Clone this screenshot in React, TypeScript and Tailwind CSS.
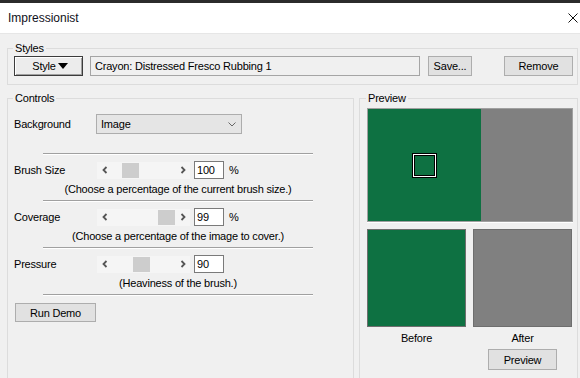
const sliders = [
  {
    label: 'Brush Size',
    value: '100',
    pct: true,
    thumb: 'ml-[10px]',
    hint: '(Choose a percentage of the current brush size.)',
  },
  {
    label: 'Coverage',
    value: '99',
    pct: true,
    thumb: 'ml-[46px]',
    hint: '(Choose a percentage of the image to cover.)',
  },
  {
    label: 'Pressure',
    value: '90',
    pct: false,
    thumb: 'ml-[21px]',
    hint: '(Heaviness of the brush.)',
  },
];

function Separator() {
  return <div className="ml-[35px] h-[2px] w-[270px] border-t border-[#a0a0a0] bg-white" />;
}

function Arrow({ dir }: { dir: 'left' | 'right' }) {
  return (
    <svg width="6" height="8" viewBox="0 0 6 8">
      <polyline
        points={dir === 'left' ? '4.5,1 1.5,4 4.5,7' : '1.5,1 4.5,4 1.5,7'}
        fill="none"
        stroke="#555"
        strokeWidth={1.8}
      />
    </svg>
  );
}

function SliderRow({
  label,
  value,
  pct,
  thumb,
  hint,
}: {
  label: string;
  value: string;
  pct: boolean;
  thumb: string;
  hint: string;
}) {
  return (
    <div className="h-[45px] pt-[6px]">
      <div className="flex h-[18px] items-center">
        <span className="w-[89px] pl-[6px]">{label}</span>
        <div className="flex h-[17px] w-[93px] bg-[#f5f5f5]">
          <div className="flex w-[15px] items-center justify-center">
            <Arrow dir="left" />
          </div>
          <div className="flex flex-1 items-center">
            <div className={`h-[15px] w-[17px] bg-[#cdcdcd] ${thumb}`} />
          </div>
          <div className="flex w-[15px] items-center justify-center">
            <Arrow dir="right" />
          </div>
        </div>
        <div className="ml-[4px] h-[18px] w-[30px] border border-[#7a7a7a] bg-white pl-[2px] leading-[16px]">
          {value}
        </div>
        {pct && <span className="ml-[5px]">%</span>}
      </div>
      <div className="ml-[35px] mt-[3px] w-[270px] text-center leading-[14px]">{hint}</div>
    </div>
  );
}

export default function App() {
  return (
    <div className="h-[378px] w-[580px] overflow-hidden bg-[#f0f0f0] font-['Liberation_Sans',Arial,sans-serif] text-[11px] leading-[12px] tracking-[-0.2px] text-black">
      <div className="h-[3px] bg-[#2b2b2b]" />

      {/* Title bar */}
      <div className="flex h-[31px] items-center justify-between border-b border-[#e6e6e6] bg-white pl-[8px] pr-[2px]">
        <span className="text-[12px] tracking-normal text-[#101020]">Impressionist</span>
        <svg width="10" height="10" viewBox="0 0 10 10">
          <path d="M0.5 0.5L9.5 9.5M9.5 0.5L0.5 9.5" stroke="#111" strokeWidth={1} />
        </svg>
      </div>

      <div className="pl-[7px]">
        {/* Styles */}
        <fieldset className="mt-[8px] w-[571px] border border-[#dcdcdc] px-0 pb-[8px] pt-[2px]">
          <legend className="ml-[5px] px-[2px] leading-[12px]">Styles</legend>
          <div className="flex items-center">
            <button className="ml-[6px] flex h-[20px] w-[69px] items-center justify-center border border-[#3c3c3c] bg-[#ececec] pl-[3px] shadow-[inset_1px_1px_0_#fff,inset_-1px_-1px_0_#a0a0a0]">
              <span>Style</span>
              <svg width="10" height="6" viewBox="0 0 10 6" className="ml-[2px]">
                <polygon points="0,0 10,0 5,6" fill="#000" />
              </svg>
            </button>
            <div className="ml-[7px] flex h-[20px] w-[330px] items-center border border-[#a5a5a5] pl-[4px]">
              Crayon: Distressed Fresco Rubbing 1
            </div>
            <button className="ml-[8px] h-[20px] w-[44px] border border-[#adadad] bg-[#e1e1e1]">
              Save...
            </button>
            <button className="ml-[32px] h-[20px] w-[69px] border border-[#adadad] bg-[#e1e1e1]">
              Remove
            </button>
          </div>
        </fieldset>

        <div className="mt-[7px] flex gap-[5px]">
          {/* Controls */}
          <fieldset className="h-[300px] w-[347px] border border-[#dcdcdc] px-0 pt-[10px]">
            <legend className="ml-[5px] px-[2px] leading-[12px]">Controls</legend>
            <div className="flex h-[20px] items-center">
              <span className="w-[88px] pl-[6px]">Background</span>
              <div className="flex h-[20px] w-[146px] items-center justify-between border border-[#adadad] bg-[#e5e5e5] pl-[4px] pr-[5px]">
                <span>Image</span>
                <svg width="8" height="5" viewBox="0 0 8 5">
                  <polyline points="0.5,0.5 4,4 7.5,0.5" fill="none" stroke="#666" strokeWidth={1} />
                </svg>
              </div>
            </div>
            <div className="mt-[19px]">
              <Separator />
            </div>
            {sliders.map((s) => (
              <div key={s.label}>
                <SliderRow {...s} />
                <Separator />
              </div>
            ))}
            <button className="ml-[7px] mt-[7px] h-[19px] w-[81px] border border-[#adadad] bg-[#e1e1e1]">
              Run Demo
            </button>
          </fieldset>

          {/* Preview */}
          <fieldset className="h-[300px] w-[219px] border border-[#dcdcdc] px-0 pt-[4px]">
            <legend className="ml-[6px] px-[2px] leading-[12px]">Preview</legend>
            <div className="ml-[7px] w-[206px]">
              <div className="flex h-[114px] border border-[#a0a0a0]">
                <div className="flex w-[113px] items-center justify-center bg-[#0e7142]">
                  <div className="flex h-[25px] w-[25px] border border-black">
                    <div className="flex flex-1 border border-white">
                      <div className="flex-1 border border-black" />
                    </div>
                  </div>
                </div>
                <div className="flex-1 bg-[#808080]" />
              </div>
              <div className="h-px bg-white" />
              <div className="mt-[6px] grid grid-cols-[99px_99px] gap-x-[7px]">
                <div className="h-[98px] border border-[#6e6e6e] bg-[#0e7142]" />
                <div className="h-[98px] border border-[#6e6e6e] bg-[#808080]" />
                <div className="mt-[4px] text-center leading-[14px]">Before</div>
                <div className="mt-[4px] text-center leading-[14px]">After</div>
                <div />
                <div className="mt-[4px] flex justify-center">
                  <button className="h-[21px] w-[69px] border border-[#adadad] bg-[#e1e1e1]">
                    Preview
                  </button>
                </div>
              </div>
            </div>
          </fieldset>
        </div>
      </div>
    </div>
  );
}
